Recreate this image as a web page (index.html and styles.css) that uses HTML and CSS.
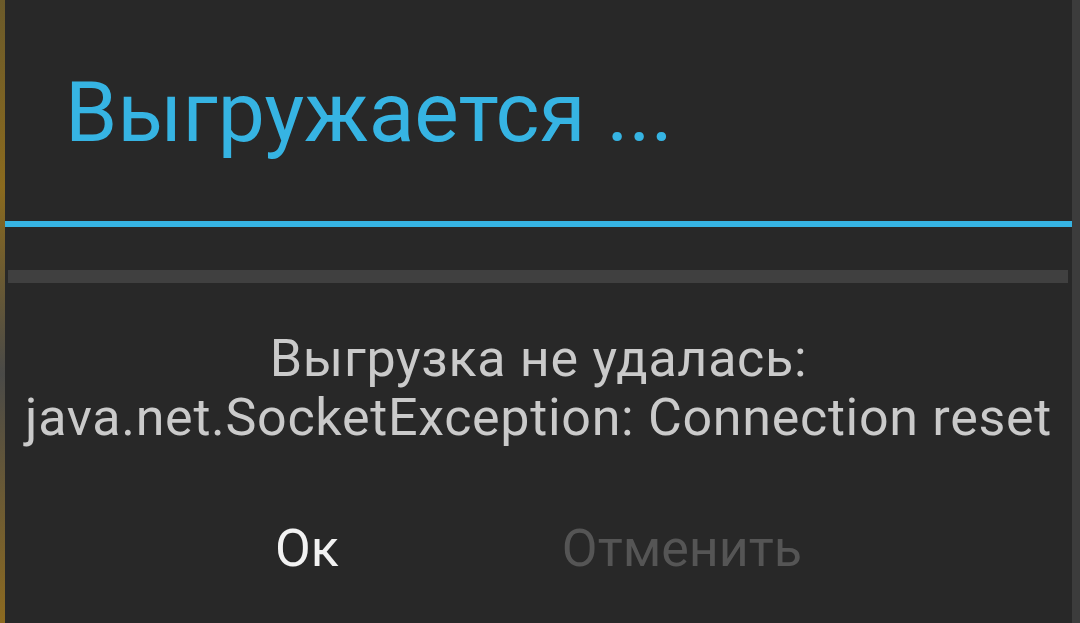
FILE: index.html
```html
<!DOCTYPE html>
<html lang="ru">
<head>
<meta charset="utf-8">
<title>Выгружается ...</title>
<link rel="stylesheet" href="styles.css">
</head>
<body>
<div class="screen">
  <div class="edge edge-left"></div>
  <div class="dialog">
    <h1 class="title">Выгружается ...</h1>
    <div class="divider"></div>
    <div class="progress"></div>
    <p class="message">Выгрузка не удалась:<br>java.net.SocketException: Connection reset</p>
    <div class="buttons">
      <button class="btn btn-ok">Ок</button>
      <button class="btn btn-cancel" disabled>Отменить</button>
    </div>
  </div>
  <div class="edge edge-right"></div>
</div>
</body>
</html>
```

FILE: styles.css
```css
html, body { margin: 0; padding: 0; }
body { background: #3a3a3a; font-family: Roboto, "Noto Sans", sans-serif; }

.screen { display: flex; width: 1080px; height: 623px; overflow: hidden; }
.edge { flex: none; }
.edge-left { width: 5px; background: linear-gradient(#6b5a2a, #8a6a1e 30%, #4a4a48 60%, #8c6a20); }
.edge-right { flex: 1; background: #3c3c3c; }

.dialog { width: 1067px; flex: none; background: #282828; display: flex; flex-direction: column; }

.title {
  margin: 0;
  padding: 63px 0 0 60px;
  height: 221px;
  box-sizing: border-box;
  font-weight: normal;
  font-size: 84px;
  line-height: 100px;
  color: #36b4e3;
}
.divider { height: 6px; background: #36b4e3; }
.progress { height: 13px; margin: 43px 4px 0 3px; background: #404040; }

.message {
  margin: 46px 0 0;
  text-align: center;
  font-size: 52px;
  line-height: 59px;
  letter-spacing: 0.7px;
  color: #cacaca;
}

.buttons { display: flex; justify-content: center; gap: 223px; margin-top: 72px; }
.btn {
  background: none;
  border: 0;
  padding: 0;
  font-family: inherit;
  font-size: 52px;
  line-height: 60px;
  color: #f2f2f2;
}
.btn-cancel { color: #555555; }
```
